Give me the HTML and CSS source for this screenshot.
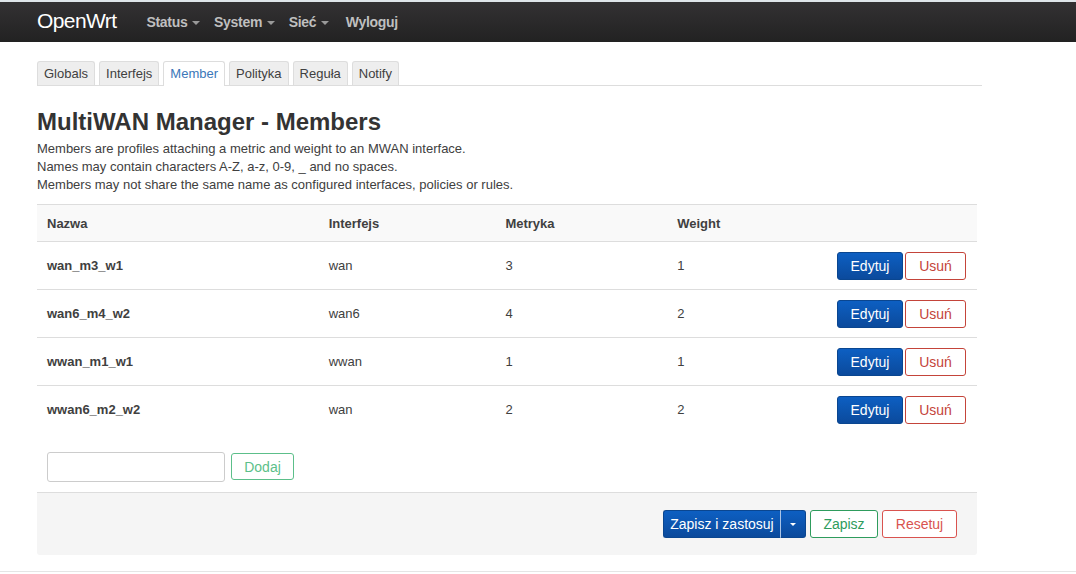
FILE: index.html
```html
<!DOCTYPE html>
<html lang="pl">
<head>
  <meta charset="UTF-8" />
  <title>OpenWrt - MultiWAN Manager - Members</title>
  <link rel="stylesheet" href="styles.css">
</head>
<body>
  <div class="topline"></div>
  <header class="navbar">
    <a class="brand" href="#">OpenWrt</a>
    <ul class="nav">
      <li><a href="#">Status <span class="caret"></span></a></li>
      <li><a href="#">System <span class="caret"></span></a></li>
      <li><a href="#">Sieć <span class="caret"></span></a></li>
      <li><a href="#">Wyloguj</a></li>
    </ul>
  </header>

  <div id="maincontent">
    <ul class="tabs">
      <li><a href="#">Globals</a></li>
      <li><a href="#">Interfejs</a></li>
      <li class="active"><a href="#">Member</a></li>
      <li><a href="#">Polityka</a></li>
      <li><a href="#">Reguła</a></li>
      <li><a href="#">Notify</a></li>
    </ul>

    <div class="content">
      <h2>MultiWAN Manager - Members</h2>
      <div class="desc">
        Members are profiles attaching a metric and weight to an MWAN interface.<br>
        Names may contain characters A-Z, a-z, 0-9, _ and no spaces.<br>
        Members may not share the same name as configured interfaces, policies or rules.
      </div>

      <table class="table">
        <thead>
          <tr>
            <th class="c-name">Nazwa</th>
            <th class="c-if">Interfejs</th>
            <th class="c-metric">Metryka</th>
            <th class="c-weight">Weight</th>
            <th></th>
          </tr>
        </thead>
        <tbody>
          <tr>
            <th>wan_m3_w1</th><td>wan</td><td>3</td><td>1</td>
            <td class="actions"><button class="btn btn-edit">Edytuj</button><button class="btn btn-remove">Usuń</button></td>
          </tr>
          <tr>
            <th>wan6_m4_w2</th><td>wan6</td><td>4</td><td>2</td>
            <td class="actions"><button class="btn btn-edit">Edytuj</button><button class="btn btn-remove">Usuń</button></td>
          </tr>
          <tr>
            <th>wwan_m1_w1</th><td>wwan</td><td>1</td><td>1</td>
            <td class="actions"><button class="btn btn-edit">Edytuj</button><button class="btn btn-remove">Usuń</button></td>
          </tr>
          <tr>
            <th>wwan6_m2_w2</th><td>wan</td><td>2</td><td>2</td>
            <td class="actions"><button class="btn btn-edit">Edytuj</button><button class="btn btn-remove">Usuń</button></td>
          </tr>
        </tbody>
      </table>

      <div class="add-row">
        <input type="text" class="add-input" />
        <button class="btn btn-add">Dodaj</button>
      </div>

      <div class="page-actions">
        <div class="split">
          <button class="btn btn-apply">Zapisz i zastosuj</button><button class="btn btn-apply btn-drop"><span class="caret"></span></button>
        </div>
        <button class="btn btn-save">Zapisz</button>
        <button class="btn btn-reset">Resetuj</button>
      </div>
    </div>
  </div>
  <footer class="foot"></footer>
</body>
</html>
```

FILE: styles.css
```css
body {
  margin: 0;
  font-family: "Liberation Sans", Arial, sans-serif;
  font-size: 13px;
  color: #404040;
  background: #fff;
}

/* 顶部导航 */
.topline {
  height: 2px;
  background: #dfe5ea;
}

.navbar {
  height: 40px;
  background: linear-gradient(#333133, #222);
  display: flex;
  align-items: center;
  padding-left: 37px;
}

.brand {
  color: #fff;
  font-size: 21px;
  text-decoration: none;
  letter-spacing: -0.6px;
  margin-right: 30px;
  margin-top: -3px;
}

.nav {
  list-style: none;
  margin: 0;
  padding: 0;
  display: flex;
  gap: 14px;
}

.nav li:last-child {
  margin-left: 3px;
}

.nav a {
  color: #bfbfbf;
  text-decoration: none;
  font-size: 14px;
  font-weight: bold;
  letter-spacing: -0.3px;
}

.caret {
  display: inline-block;
  width: 0;
  height: 0;
  vertical-align: middle;
  border-top: 4px solid #999;
  border-left: 4px solid transparent;
  border-right: 4px solid transparent;
  margin-left: 1px;
}

/* 主内容 */
#maincontent {
  padding: 19px 0 0 37px;
  width: 945px;
}

.tabs {
  list-style: none;
  margin: 0;
  padding: 0;
  display: flex;
  gap: 4px;
  border-bottom: 1px solid #ddd;
  height: 24px;
}

.tabs li a {
  display: block;
  height: 23px;
  line-height: 24px;
  padding: 0 6px;
  background: #eee;
  border: 1px solid #ddd;
  border-bottom: none;
  border-radius: 3px 3px 0 0;
  color: #404040;
  text-decoration: none;
}

.tabs li.active a {
  background: #fff;
  color: #3b77b9;
  height: 24px;
}

.content {
  width: 940px;
}

h2 {
  margin: 22px 0 4px;
  font-size: 24px;
  line-height: 28px;
  color: #333;
}

.desc {
  line-height: 18px;
  margin-bottom: 10px;
}

/* 表格 */
.table {
  width: 100%;
  border-collapse: collapse;
}

.table tr {
  border-top: 1px solid #ddd;
}

.table thead tr {
  background: #f9f9f9;
  height: 37px;
}

.table tbody tr {
  height: 48px;
}

.table th, .table td {
  text-align: left;
  padding: 0 10px;
  vertical-align: middle;
}

.table th {
  color: #404040;
}

.c-name { width: 262px; }
.c-if { width: 157px; }
.c-metric { width: 152px; }
.c-weight { width: 140px; }

.table td.actions {
  text-align: right;
  padding-right: 11px;
  white-space: nowrap;
}

/* 按钮 */
.btn {
  font-family: inherit;
  font-size: 14px;
  height: 28px;
  padding: 0 13px;
  border-radius: 3px;
  cursor: pointer;
  background: #fff;
  vertical-align: middle;
  white-space: nowrap;
}

.btn-edit, .btn-apply {
  background: linear-gradient(#0d5fc2, #0b4a9c);
  border: 1px solid #0a4690;
  color: #fff;
}

.btn-edit {
  width: 66px;
  padding: 0;
}

.btn-remove {
  border: 1px solid #c4443a;
  color: #c4443a;
  width: 61px;
  margin-left: 2px;
  padding: 0;
}

.add-row {
  display: flex;
  gap: 6px;
  align-items: center;
  padding: 18px 10px 10px;
}

.add-input {
  width: 178px;
  height: 30px;
  box-sizing: border-box;
  border: 1px solid #ccc;
  border-radius: 3px;
}

.btn-add {
  border: 1px solid #5cbf8a;
  color: #5cbf8a;
  height: 27px;
  width: 63px;
  padding: 0;
}

.page-actions {
  background: #f5f5f5;
  border-top: 1px solid #ddd;
  height: 62px;
  display: flex;
  justify-content: flex-end;
  align-items: center;
  padding-right: 20px;
  gap: 4px;
  border-radius: 0 0 3px 3px;
}

.split {
  display: flex;
}

.btn-apply {
  border-radius: 3px 0 0 3px;
  padding: 0;
  width: 118px;
  border-right: 1px solid #a9c4e6;
}

.btn-drop {
  border-radius: 0 3px 3px 0;
  border-left: none;
  border-right: 1px solid #0a4690;
  width: 25px;
  padding: 0;
}

.btn-drop .caret {
  border-top-color: #fff;
  border-width: 3px 3px 0;
  margin: 0;
}

.btn-save {
  border: 1px solid #2e9c5d;
  color: #2e9c5d;
  width: 68px;
  padding: 0;
}

.btn-reset {
  border: 1px solid #d9534f;
  color: #d9534f;
  width: 75px;
  padding: 0;
}

.foot {
  margin-top: 16px;
  border-top: 1px solid #e5e5e5;
}
```
